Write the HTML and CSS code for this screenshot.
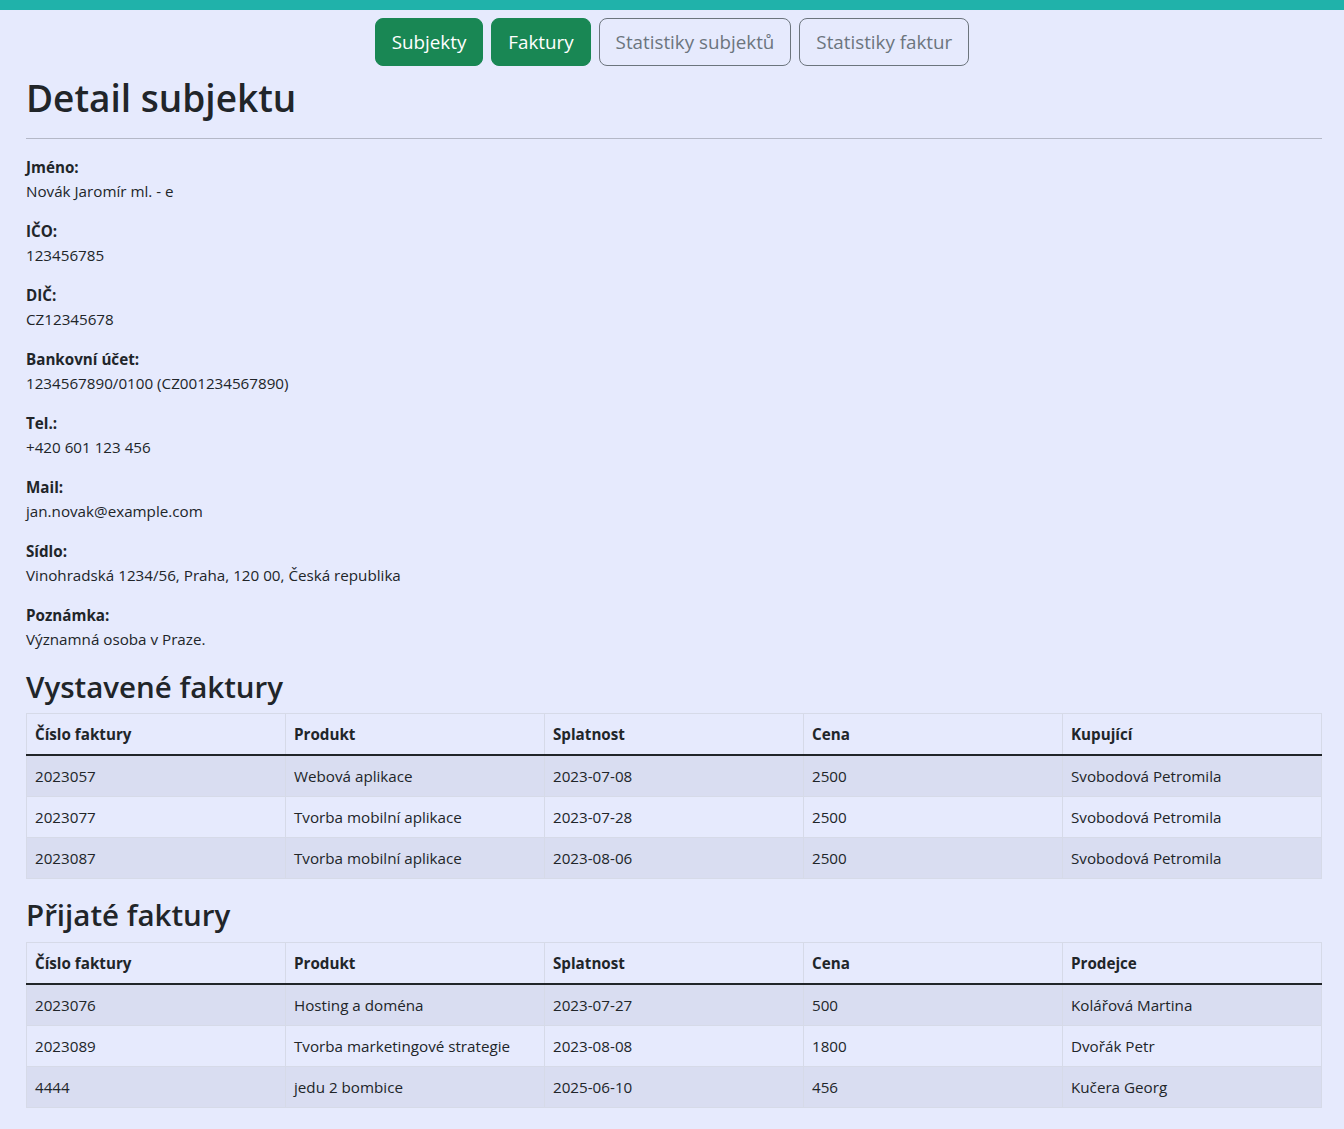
FILE: index.html
```html
<!DOCTYPE html>
<html lang="cs">
<head>
<meta charset="utf-8">
<title>Detail subjektu</title>
<link rel="stylesheet" href="styles.css">
</head>
<body>
<div class="topbar"></div>
<nav class="nav">
  <a class="btn btn-success" href="#">Subjekty</a>
  <a class="btn btn-success" href="#">Faktury</a>
  <a class="btn btn-outline" href="#">Statistiky subjektů</a>
  <a class="btn btn-outline" href="#">Statistiky faktur</a>
</nav>
<main class="container">
  <h1 class="title">Detail subjektu</h1>
  <hr class="rule">
  <div class="field"><div class="label">Jméno:</div><div class="value">Novák Jaromír ml. - e</div></div>
  <div class="field"><div class="label">IČO:</div><div class="value">123456785</div></div>
  <div class="field"><div class="label">DIČ:</div><div class="value">CZ12345678</div></div>
  <div class="field"><div class="label">Bankovní účet:</div><div class="value">1234567890/0100 (CZ001234567890)</div></div>
  <div class="field"><div class="label">Tel.:</div><div class="value">+420 601 123 456</div></div>
  <div class="field"><div class="label">Mail:</div><div class="value">jan.novak@example.com</div></div>
  <div class="field"><div class="label">Sídlo:</div><div class="value">Vinohradská 1234/56, Praha, 120 00, Česká republika</div></div>
  <div class="field"><div class="label">Poznámka:</div><div class="value">Významná osoba v Praze.</div></div>

  <h2 class="subtitle">Vystavené faktury</h2>
  <table class="table">
    <thead>
      <tr><th>Číslo faktury</th><th>Produkt</th><th>Splatnost</th><th>Cena</th><th>Kupující</th></tr>
    </thead>
    <tbody>
      <tr><td>2023057</td><td>Webová aplikace</td><td>2023-07-08</td><td>2500</td><td>Svobodová Petromila</td></tr>
      <tr><td>2023077</td><td>Tvorba mobilní aplikace</td><td>2023-07-28</td><td>2500</td><td>Svobodová Petromila</td></tr>
      <tr><td>2023087</td><td>Tvorba mobilní aplikace</td><td>2023-08-06</td><td>2500</td><td>Svobodová Petromila</td></tr>
    </tbody>
  </table>

  <h2 class="subtitle">Přijaté faktury</h2>
  <table class="table">
    <thead>
      <tr><th>Číslo faktury</th><th>Produkt</th><th>Splatnost</th><th>Cena</th><th>Prodejce</th></tr>
    </thead>
    <tbody>
      <tr><td>2023076</td><td>Hosting a doména</td><td>2023-07-27</td><td>500</td><td>Kolářová Martina</td></tr>
      <tr><td>2023089</td><td>Tvorba marketingové strategie</td><td>2023-08-08</td><td>1800</td><td>Dvořák Petr</td></tr>
      <tr><td>4444</td><td>jedu 2 bombice</td><td>2025-06-10</td><td>456</td><td>Kučera Georg</td></tr>
    </tbody>
  </table>
</main>
</body>
</html>
```

FILE: styles.css
```css
* { box-sizing: border-box; }

html, body {
  margin: 0;
  padding: 0;
}

body {
  background: #e6eafd;
  color: #212529;
  font-family: "Open Sans", "Noto Sans", sans-serif;
  font-size: 15.2px;
  line-height: 24px;
}

.topbar {
  height: 10px;
  background: #20b2aa;
}

.nav {
  display: flex;
  justify-content: center;
  gap: 8px;
  padding-top: 8px;
}

.btn {
  display: inline-block;
  padding: 8px 16px;
  font-size: 18.8px;
  line-height: 30px;
  border: 1px solid transparent;
  border-radius: 8px;
  text-decoration: none;
}

.btn-success {
  background: #198754;
  border-color: #198754;
  color: #fff;
}

.btn-outline {
  border-color: #6c757d;
  color: #6c757d;
}

.container {
  padding: 8px 22px 0 26px;
}

.title {
  margin: 0 0 8px;
  font-size: 37px;
  font-weight: 600;
  line-height: 48px;
}

.rule {
  margin: 16px 0;
  border: 0;
  border-top: 1px solid rgba(33, 37, 41, 0.25);
}

.field {
  margin-bottom: 16px;
}

.label {
  font-weight: 700;
}

.subtitle {
  margin: 0 0 8px;
  padding-top: 2px;
  font-size: 29.5px;
  font-weight: 600;
  line-height: 36.4px;
}

.table {
  width: 100%;
  border-collapse: collapse;
  table-layout: fixed;
  margin-bottom: 16px;
}

.table th,
.table td {
  padding: 8px;
  text-align: left;
  border: 1px solid #d6dae8;
}

.table th {
  font-weight: 700;
  border-bottom: 2px solid #212529;
}

.table tbody tr:nth-child(odd) td {
  background: #d9ddf1;
}
```
